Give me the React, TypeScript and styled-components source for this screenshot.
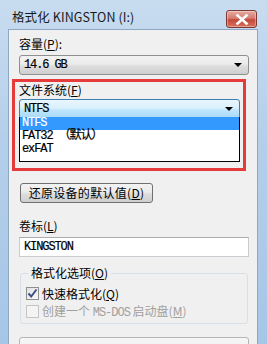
import React from 'react'
import styled, { createGlobalStyle } from 'styled-components'

const cjk = `"Noto Sans CJK SC", "Liberation Sans", sans-serif`
const mono = `"Liberation Mono", "Noto Sans CJK SC", monospace`

const GlobalStyle = createGlobalStyle`
  html, body {
    margin: 0;
    padding: 0;
    width: 267px;
    height: 344px;
    overflow: hidden;
    background: #9fc3e6;
  }
`

const Window = styled.div`
  width: 267px;
  height: 344px;
  box-sizing: border-box;
  padding: 0 9px 0 8px;
  background: linear-gradient(180deg, #c8dcf0 0%, #b5cfea 40%, #a6c6e6 100%);
  display: flex;
  flex-direction: column;
  font-family: ${cjk};
`

const TitleBar = styled.div`
  height: 29px;
  flex: none;
  display: flex;
  align-items: flex-start;
  justify-content: space-between;
  padding: 9px 1px 0 4px;
  box-sizing: border-box;
`

const Title = styled.div`
  font-size: 12.5px;
  line-height: 15px;
  color: #1a1a1a;
  letter-spacing: 0.1px;
`

const CloseButton = styled.div`
  width: 31px;
  height: 18px;
  margin-top: 1px;
  box-sizing: border-box;
  border: 1px solid #7a3a34;
  border-radius: 3px;
  background: linear-gradient(180deg, #e6aca2 0%, #d67b70 45%, #c2493c 55%, #d9705c 100%);
  box-shadow: inset 0 0 0 1px rgba(255, 255, 255, 0.35);
  display: flex;
  align-items: center;
  justify-content: center;
`

const Client = styled.div`
  flex: 1;
  background: #f0f0f0;
  border: 1px solid #8ea7c2;
  border-bottom: none;
  padding: 6px 8px 0 10px;
  display: flex;
  flex-direction: column;
  font-size: 12px;
  color: #000;

  & > * {
    flex-shrink: 0;
  }
`

const Label = styled.div<{ $gap?: number }>`
  font-size: 12px;
  line-height: 16px;
  height: 16px;
  margin-top: ${(p) => p.$gap ?? 0}px;
  margin-bottom: 3px;
  color: #000;

  u {
    text-decoration: underline;
    text-underline-offset: 1px;
  }
`

const HiddenLabel = styled.div`
  height: 16px;
  margin: 3px 0 2px;
`

const Select = styled.div<{ $focused?: boolean }>`
  height: 20px;
  flex: none;
  box-sizing: border-box;
  border: 1px solid ${(p) => (p.$focused ? '#3c7fb1' : '#8e8f8f')};
  border-radius: 3px;
  background: ${(p) =>
    p.$focused
      ? 'linear-gradient(180deg, #eaf6fd 0%, #d9f0fc 45%, #bee6fd 55%, #a7d9f5 100%)'
      : 'linear-gradient(180deg, #f2f2f2 0%, #ebebeb 45%, #dddddd 55%, #cfcfcf 100%)'};
  display: flex;
  align-items: center;
  justify-content: space-between;
  padding: 0 6px 0 4px;
`

const SelectText = styled.span`
  font-family: ${mono};
  font-size: 12px;
  color: #000;
  letter-spacing: -1.1px;
  -webkit-text-stroke: 0.2px #000;
`

const Arrow = styled.span`
  width: 0;
  height: 0;
  margin-left: auto;
  border-left: 4px solid transparent;
  border-right: 4px solid transparent;
  border-top: 4px solid #000;
`

const Highlight = styled.div`
  margin: 4px 3px 0 -7px;
  border: 3px solid #e53b3b;
  padding: 0 3px 0 4px;
  display: flex;
  flex-direction: column;
  height: 92px;
  box-sizing: border-box;
  overflow: hidden;

  ${Label} {
    margin-bottom: 1px;
  }
`

const Combo = styled.div`
  position: relative;
`

const List = styled.div`
  position: absolute;
  top: 18px;
  left: 0;
  right: 0;
  z-index: 2;
  background: #fff;
  border: 1px solid #000;
  border-top: none;
  padding-bottom: 5px;
`

const ListItem = styled.div<{ $selected?: boolean }>`
  height: 13px;
  line-height: 13px;
  padding-left: 2px;
  font-family: ${mono};
  font-size: 12px;
  letter-spacing: -1.1px;
  -webkit-text-stroke: 0.2px currentColor;
  background: ${(p) => (p.$selected ? '#3399ff' : '#fff')};
  color: ${(p) => (p.$selected ? '#fff' : '#000')};
`

const ResetButton = styled.div`
  align-self: flex-start;
  margin: 12px 0 0 1px;
  width: 133px;
  height: 20px;
  box-sizing: border-box;
  border: 1px solid #707070;
  border-radius: 3px;
  background: linear-gradient(180deg, #f2f2f2 0%, #ebebeb 45%, #dddddd 55%, #cfcfcf 100%);
  font-size: 12px;
  line-height: 18px;
  text-align: center;
  color: #000;
  letter-spacing: 0.3px;

  u {
    text-underline-offset: 1px;
  }
`

const TextInput = styled.div`
  height: 20px;
  box-sizing: border-box;
  border: 1px solid #c9cbd0;
  border-top-color: #abadb3;
  background: #fff;
  padding: 0 4px;
  line-height: 18px;
  font-family: ${mono};
  font-size: 12px;
  letter-spacing: -1.1px;
  -webkit-text-stroke: 0.2px #000;
  color: #000;
`

const Group = styled.fieldset`
  margin: 8px 1px 0 1px;
  padding: 4px 0 4px 5px;
  border: 1px solid #d5dfe5;
  border-radius: 3px;
  display: flex;
  flex-direction: column;
  gap: 2px;
  box-sizing: border-box;
`

const Legend = styled.legend`
  padding: 0 3px;
  margin-left: 2px;
  font-size: 12px;
  color: #000;
  line-height: 16px;

  u {
    text-underline-offset: 1px;
  }
`

const CheckRow = styled.div<{ $disabled?: boolean }>`
  display: flex;
  align-items: center;
  gap: 3px;
  height: 16px;
  font-size: 12px;
  color: ${(p) => (p.$disabled ? '#a0a0a0' : '#000')};

  u {
    text-underline-offset: 1px;
  }
`

const Checkbox = styled.div<{ $disabled?: boolean }>`
  width: 13px;
  height: 13px;
  box-sizing: border-box;
  border: 1px solid ${(p) => (p.$disabled ? '#c4c4c4' : '#8e8f8f')};
  background: ${(p) => (p.$disabled ? '#f4f4f4' : 'linear-gradient(135deg, #e2e2e2 0%, #f8f8f8 100%)')};
  display: flex;
  align-items: center;
  justify-content: center;
`

const Mono = styled.span`
  font-family: ${mono};
  font-size: 12px;
  letter-spacing: -1px;
`

const BottomBar = styled.div`
  margin-top: 13px;
  height: 20px;
  border: 1px solid #b5b5b5;
  border-radius: 3px;
  background: linear-gradient(180deg, #f6f6f6 0%, #e9e9e9 100%);
`

const fileSystems = [
  { name: 'NTFS', selected: true },
  { name: 'FAT32 （默认）', selected: false },
  { name: 'exFAT', selected: false },
]

export default function App() {
  return (
    <>
      <GlobalStyle />
      <Window>
        <TitleBar>
          <Title>格式化 KINGSTON (I:)</Title>
          <CloseButton>
            <svg width="14" height="11" viewBox="0 0 14 11">
              <path d="M2.5 1.5 L11.5 9.5 M11.5 1.5 L2.5 9.5" stroke="#fff" strokeWidth="2.6" strokeLinecap="square" />
            </svg>
          </CloseButton>
        </TitleBar>
        <Client>
          <Label>容量(<u>P</u>):</Label>
          <Select>
            <SelectText>14.6 GB</SelectText>
            <Arrow />
          </Select>

          <Highlight>
            <Label>文件系统(<u>F</u>)</Label>
            <Combo>
              <Select $focused>
                <SelectText>NTFS</SelectText>
                <Arrow />
              </Select>
              <List>
                {fileSystems.map((fs) => (
                  <ListItem key={fs.name} $selected={fs.selected}>{fs.name}</ListItem>
                ))}
              </List>
            </Combo>
            <HiddenLabel />
            <Select>
              <Arrow />
            </Select>
          </Highlight>

          <ResetButton>还原设备的默认值(<u>D</u>)</ResetButton>

          <Label $gap={15}>卷标(<u>L</u>)</Label>
          <TextInput>KINGSTON</TextInput>

          <Group>
            <Legend>格式化选项(<u>O</u>)</Legend>
            <CheckRow>
              <Checkbox>
                <svg width="11" height="11" viewBox="0 0 11 11">
                  <path d="M1.5 5.5 L4.2 8.5 L9.5 1.5" stroke="#3d4f86" strokeWidth="2" fill="none" />
                </svg>
              </Checkbox>
              <span>快速格式化(<u>Q</u>)</span>
            </CheckRow>
            <CheckRow $disabled>
              <Checkbox $disabled />
              <span>创建一个 <Mono>MS-DOS</Mono> 启动盘(<u>M</u>)</span>
            </CheckRow>
          </Group>

          <BottomBar />
        </Client>
      </Window>
    </>
  )
}
